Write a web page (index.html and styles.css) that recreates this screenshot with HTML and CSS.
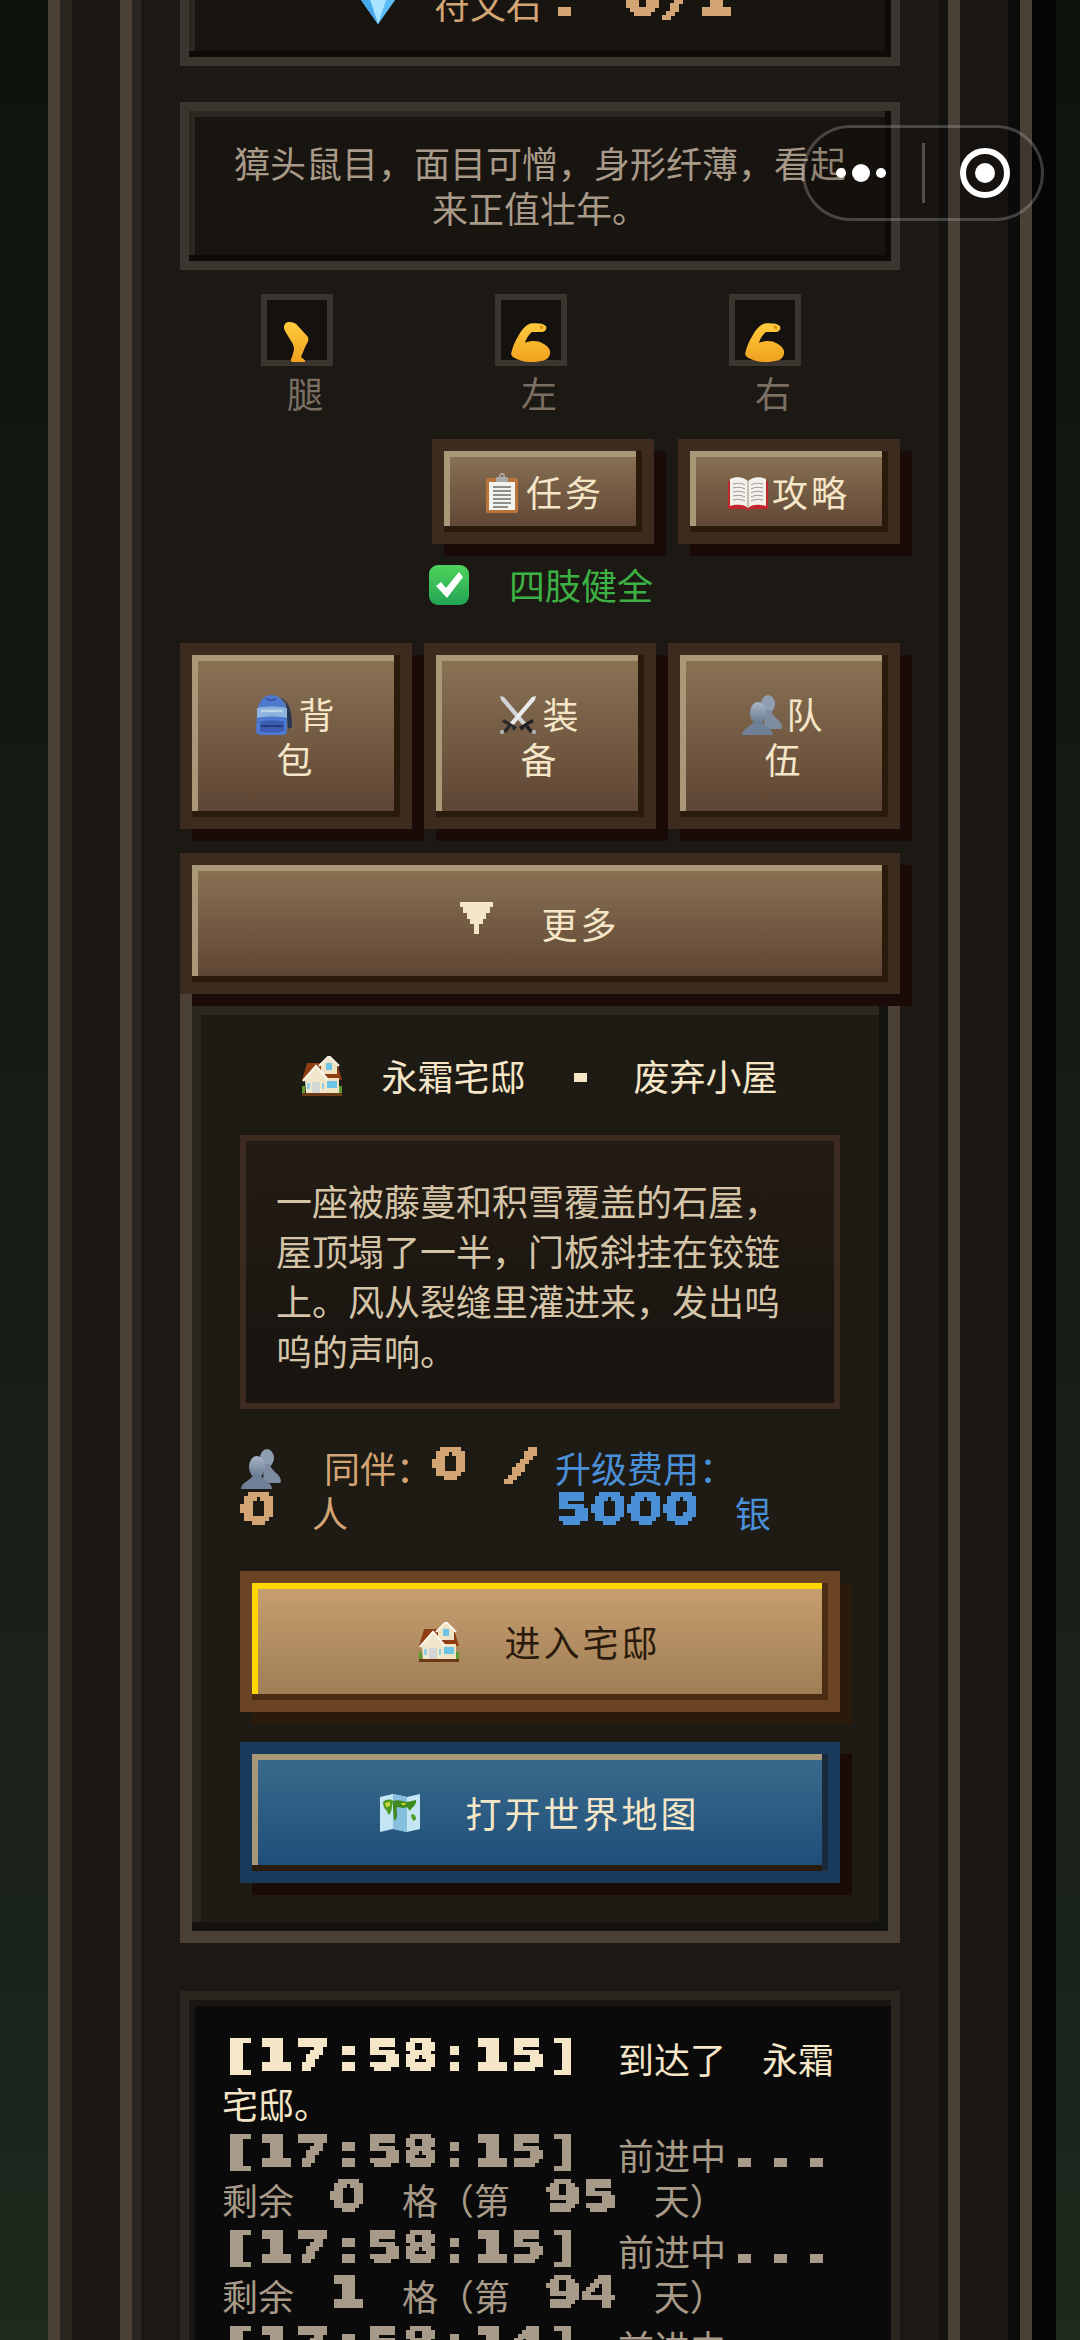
FILE: index.html
```html
<!DOCTYPE html>
<html lang="zh">
<head>
<meta charset="utf-8">
<title>永霜宅邸</title>
<link rel="stylesheet" href="styles.css">
</head>
<body>
<svg class="defs" aria-hidden="true">
  <defs>
    <filter id="pixelate" x="-10%" y="-100%" width="120%" height="300%" color-interpolation-filters="sRGB" primitiveUnits="userSpaceOnUse">
      <feFlood x="2" y="2" width="1" height="1"/>
      <feComposite width="4" height="4"/>
      <feTile result="grid"/>
      <feComposite in="SourceGraphic" in2="grid" operator="in"/>
      <feComponentTransfer><feFuncA type="discrete" tableValues="0 1 1 1"/></feComponentTransfer>
      <feMorphology operator="dilate" radius="2"/>
    </filter>
    <linearGradient id="yel" x1="0" y1="0" x2="0" y2="1"><stop offset="0" stop-color="#ffcb3e"/><stop offset="1" stop-color="#f0a11e"/></linearGradient>
    <linearGradient id="sil" x1="0" y1="0" x2="0" y2="1"><stop offset="0" stop-color="#a9b7c8"/><stop offset="1" stop-color="#66768c"/></linearGradient>
    <linearGradient id="chk" x1="0" y1="0" x2="0" y2="1"><stop offset="0" stop-color="#4fd35a"/><stop offset="1" stop-color="#23a457"/></linearGradient>
    <symbol id="i-gem" viewBox="0 0 42 42">
      <path d="M2 14 L10 2 H32 L40 14 L21 41Z" fill="#7fd0fa"/>
      <path d="M2 14 H40 L21 41Z" fill="#5cbcf4"/>
      <path d="M12 14 H30 L21 41Z" fill="#a8e4ff"/>
      <path d="M2 14 L12 14 L21 41Z" fill="#46a8ea"/>
    </symbol>
    <symbol id="i-leg" viewBox="0 0 40 40">
      <path d="M11 0 C16 0 19 1 21 4 L31 15 C32 18 31 20 29 23 L24 35 C26 37 29 38 28 40 L15 40 C13 38 14 37 15 35 L17 28 C17 24 16 22 14 19 L8 9 C6 5 7 1 11 0Z" fill="url(#yel)"/>
    </symbol>
    <symbol id="i-flex" viewBox="0 0 100 100">
      <path d="M49 4 C60 2 80 2 87 10 C92 18 84 26 76 25 L52 25 C44 32 38 42 35 52 C50 46 68 46 80 54 C100 64 104 82 88 94 C70 102 40 102 24 96 C8 90 -2 86 1 76 C5 60 12 44 20 32 C27 20 36 8 49 4Z" fill="url(#yel)"/>
      <path d="M72 9 C77 8 82 11 80 16 C78 19 73 18 72 14Z" fill="#e08e14"/>
    </symbol>
    <symbol id="i-clip" viewBox="0 0 40 40">
      <rect x="4" y="5" width="32" height="35" rx="2" fill="#b8763c"/>
      <rect x="7" y="9" width="26" height="28" fill="#f2f2ee"/>
      <path d="M11 14H29M11 18H29M11 22H29M11 26H29M11 30H29M11 34H26" stroke="#6d6d6d" stroke-width="1.7"/>
      <rect x="14" y="4" width="12" height="5" rx="1" fill="#a9a9a9"/>
      <circle cx="20" cy="3" r="2.2" fill="none" stroke="#b5b5b5" stroke-width="1.4"/>
    </symbol>
    <symbol id="i-book" viewBox="0 0 40 40">
      <path d="M0 8 V36 H18 L20 38 L22 36 H40 V8Z" fill="#c0262a"/>
      <path d="M2 6 C8 3 16 4 20 8 C24 4 32 3 38 6 V33 C32 31 24 31 20 35 C16 31 8 31 2 33Z" fill="#f4f1ea"/>
      <path d="M20 8 V35" stroke="#b5b0a6" stroke-width="1.5"/>
      <path d="M5 11 C9 10 14 10 17 12M5 15 C9 14 14 14 17 16M5 19 C9 18 14 18 17 20M5 23 C9 22 14 22 17 24M5 27 C9 26 14 26 17 28M23 12 C26 10 31 10 35 11M23 16 C26 14 31 14 35 15M23 20 C26 18 31 18 35 19M23 24 C26 22 31 22 35 23M23 28 C26 26 31 26 35 27" stroke="#9a9a98" stroke-width="1" fill="none"/>
    </symbol>
    <symbol id="i-pack" viewBox="0 0 40 40">
      <path d="M26 3 C34 5 38 14 38 32 L34 34 L32 8Z" fill="#2a3552"/>
      <path d="M17 0 C9 0 4 8 3 18 L2 35 C2 38 4 40 7 40 H28 C31 40 33 38 33 35 V18 C33 8 26 0 17 0Z" fill="#4f78cf"/>
      <path d="M3 13 C11 11 25 11 33 13 V23 C25 21 11 21 3 23Z" fill="#8db4dc"/>
      <path d="M7 16 H29" stroke="#bcd4e8" stroke-width="2.4"/>
      <path d="M6 27 C13 25 23 25 30 27 V36 C23 38 13 38 6 36Z" fill="#3a5cb2"/>
      <path d="M7 31 H29" stroke="#1f3470" stroke-width="1.6"/>
      <path d="M12 3 C14 6 20 6 22 3" stroke="#3a5aa6" stroke-width="2" fill="none"/>
    </symbol>
    <symbol id="i-swords" viewBox="0 0 40 40">
      <path d="M2 1 L6 2 L30 30 L27 33 L3 5Z" fill="#cfd3d6"/>
      <path d="M38 1 L34 2 L10 30 L13 33 L37 5Z" fill="#e8eaec"/>
      <path d="M21 32 L34 24 L36 27 L30 30 L35 36 L32 38 L27 32 L24 36Z" fill="#202022"/>
      <path d="M19 32 L6 24 L4 27 L10 30 L5 36 L8 38 L13 32 L16 36Z" fill="#2a2a2c"/>
      <circle cx="4" cy="37" r="2.2" fill="#a9adb0"/><circle cx="36" cy="37" r="2.2" fill="#a9adb0"/>
    </symbol>
    <symbol id="i-people" viewBox="0 0 40 40">
      <ellipse cx="26" cy="9" rx="7" ry="9" fill="#8f9db0"/>
      <path d="M23 15 H29 C30 23 40 24 40 33 C40 34 38 34 34 34 H22Z" fill="#7d8ca0"/>
      <ellipse cx="16" cy="18" rx="8" ry="11" fill="url(#sil)"/>
      <path d="M12 26 H20 C21 31 31 33 31 40 H0 C0 33 11 31 12 26Z" fill="#6f7f95"/>
    </symbol>
    <symbol id="i-house" viewBox="0 0 40 40">
      <path d="M5 7 H35 L40 24 H0Z" fill="#8f3d12"/>
      <path d="M19 9 L27 1 L35 9 V18 H19Z" fill="#efe3c4"/>
      <path d="M17 10 L27 0 L37 10" stroke="#fbf7ec" stroke-width="2" fill="none"/>
      <rect x="24" y="7" width="6" height="7" fill="#6cc4e8"/>
      <rect x="22" y="22" width="15" height="15" fill="#efe3c4"/>
      <rect x="25" y="25" width="10" height="7" fill="#6cc4e8"/>
      <path d="M3 24 L14 11 L25 24 V37 H4Z" fill="#f0e6cb"/>
      <path d="M1 25 L14 10 L26 24" stroke="#fbf7ec" stroke-width="2.4" fill="none"/>
      <rect x="10" y="26" width="8" height="11" fill="#d3d6d4"/>
      <rect x="5" y="27" width="3" height="6" fill="#8fd0e8"/><rect x="20" y="27" width="2" height="6" fill="#8fd0e8"/>
      <path d="M0 30 H3 V37 H0Z M37 30 H40 V37 H37Z" fill="#5f9a30"/>
      <rect x="0" y="37" width="40" height="3" fill="#6b3a14"/>
    </symbol>
    <symbol id="i-map" viewBox="0 0 40 40">
      <path d="M0 4 L13 1 L27 4 L40 1 V36 L27 39 L13 36 L0 39Z" fill="#c4e6f4"/>
      <path d="M13 1 L27 4 V39 L13 36Z" fill="#86bfdd"/>
      <path d="M3 9 C6 6 12 6 13 8 L12 14 C11 22 8 24 7 18 C5 16 3 14 3 9Z" fill="#4f9a24"/>
      <path d="M13 8 C18 6 24 9 27 9 L36 7 C37 12 32 14 30 18 L27 14 C23 16 20 14 17 14 C16 20 19 22 15 28 C13 26 14 20 13 16Z" fill="#3f8a20"/>
      <path d="M31 22 C33 20 36 22 36 26 C34 29 32 28 31 22Z" fill="#4f9a24"/>
      <path d="M5 10 L10 9 L10 13 L6 14Z M21 10 L26 10 L25 12 L22 12Z" fill="#c8d83a"/>
    </symbol>
    <symbol id="i-check" viewBox="0 0 40 40">
      <rect width="40" height="40" rx="9" fill="url(#chk)"/>
      <path d="M7 21 L12 17 L17 23 L30 7 L34 12 L18 33Z" fill="#fff"/>
    </symbol>
    <symbol id="i-down" viewBox="0 0 33 32">
      <path d="M0 0H33V5H30V11H26V17H23V22H19V32H14V22H10V17H7V11H3V5H0Z" fill="#f5e6c8"/>
    </symbol>
  </defs>
</svg>

<div class="screen">
  <main class="outer">
    <div class="inner">
      <section class="panel rune">
        <svg class="ico"><use href="#i-gem"/></svg> 符文石<span class="px n1"><b><i>:</i></b></span> <span class="px n3"><b>0<i class="sl">/</i>1</b></span>
      </section>

      <section class="panel bio">獐头鼠目，面目可憎，身形纤薄，看起来正值壮年。</section>

      <section class="limbs">
        <div class="limb"><div class="slot"><svg class="limb-ico"><use href="#i-leg"/></svg></div><span class="limb-name">腿</span></div>
        <div class="limb"><div class="slot"><svg class="limb-ico"><use href="#i-flex"/></svg></div><span class="limb-name">左</span></div>
        <div class="limb"><div class="slot"><svg class="limb-ico"><use href="#i-flex"/></svg></div><span class="limb-name">右</span></div>
      </section>

      <nav class="tools">
        <button class="btn tool"><svg class="ico gap"><use href="#i-clip"/></svg>任务</button>
        <button class="btn tool"><svg class="ico gap"><use href="#i-book"/></svg>攻略</button>
      </nav>

      <div class="status"><svg class="ico"><use href="#i-check"/></svg><span>四肢健全</span></div>

      <nav class="grid3">
        <button class="btn square"><svg class="ico gap"><use href="#i-pack"/></svg>背<br>包</button>
        <button class="btn square"><svg class="ico gap"><use href="#i-swords"/></svg>装<br>备</button>
        <button class="btn square"><svg class="ico gap"><use href="#i-people"/></svg>队<br>伍</button>
      </nav>

      <button class="btn wide more"><svg class="down"><use href="#i-down"/></svg><span>更多</span></button>

      <section class="home">
        <h2 class="home-title"><svg class="ico"><use href="#i-house"/></svg><span>永霜宅邸</span><span class="px n1 dot"><b><i>·</i></b></span><span>废弃小屋</span></h2>
        <p class="home-desc">一座被藤蔓和积雪覆盖的石屋，屋顶塌了一半，门板斜挂在铰链上。风从裂缝里灌进来，发出呜呜的声响。</p>
        <div class="stats">
          <div class="stat-left"><svg class="ico people"><use href="#i-people"/></svg> 同伴：<span class="px n1"><b>0</b></span> <span class="px n1"><b><i class="sl">/</i></b></span><br><span class="px n1"><b>0</b></span> 人</div>
          <div class="stat-right">升级费用：<br><span class="px n4"><b>5000</b></span> 银</div>
        </div>
        <button class="btn wide gold"><svg class="ico"><use href="#i-house"/></svg><span>进入宅邸</span></button>
        <button class="btn wide blue"><svg class="ico"><use href="#i-map"/></svg><span>打开世界地图</span></button>
      </section>

      <section class="log">
        <p class="entry latest"><span class="px n10"><b><i>[</i>17<i>:</i>58<i>:</i>15<i>]</i></b></span> 到达了 永霜宅邸。</p>
        <p class="entry"><span class="px n10"><b><i>[</i>17<i>:</i>58<i>:</i>15<i>]</i></b></span> 前进中<span class="px n3"><b><i>.</i><i>.</i><i>.</i></b></span> 剩余 <span class="px n1"><b>0</b></span> 格（第 <span class="px n2"><b>95</b></span> 天）</p>
        <p class="entry"><span class="px n10"><b><i>[</i>17<i>:</i>58<i>:</i>15<i>]</i></b></span> 前进中<span class="px n3"><b><i>.</i><i>.</i><i>.</i></b></span> 剩余 <span class="px n1"><b>1</b></span> 格（第 <span class="px n2"><b>94</b></span> 天）</p>
        <p class="entry"><span class="px n10"><b><i>[</i>17<i>:</i>58<i>:</i>14<i>]</i></b></span> 前进中<span class="px n3"><b><i>.</i><i>.</i><i>.</i></b></span> 剩余 <span class="px n1"><b>2</b></span> 格（第 <span class="px n2"><b>93</b></span> 天）</p>
      </section>
    </div>
  </main>

  <div class="capsule">
    <div class="dots"><i></i><i class="big"></i><i></i></div>
    <div class="sep"></div>
    <div class="target"><i></i></div>
  </div>
</div>
</body>
</html>
```

FILE: styles.css
```css
* { box-sizing: border-box; }
html, body { margin: 0; padding: 0; }
body { background: #0e130e; }
.defs { position: absolute; width: 0; height: 0; }

.screen {
  position: relative;
  width: 1080px;
  height: 2340px;
  overflow: hidden;
  padding-left: 48px;
  background: linear-gradient(180deg, #0e130e 0%, #141a14 40%, #1b241b 85%, #1e2a1e 100%);
  font-family: "Noto Sans CJK SC", "Noto Sans", sans-serif;
  font-size: 36px;
  line-height: 45px;
  word-spacing: 27.9px;
  color: #f5e6c8;
}

.outer {
  width: 984px;
  min-height: 2340px;
  padding: 0 60px;
  background: #1a1612;
  border-left: 12px solid #4a4036;
  border-right: 12px solid #4a4036;
  box-shadow: 24px 0 0 #050505, inset 12px 0 0 #2a2620, inset -12px 0 0 #0e0c0a;
}
.inner {
  width: 840px;
  min-height: 2400px;
  margin-top: -57px;
  padding: 0 48px;
  background: #1c1814;
  border-left: 12px solid #4a4036;
  border-right: 12px solid #4a4036;
  box-shadow: inset 9px 0 0 #2a2620, inset -9px 0 0 #141210;
}

/* pixel numerals */
.px {
  display: inline-block;
  height: 30px;
  line-height: 30px;
  vertical-align: 5px;
  word-spacing: 0;
  white-space: nowrap;
  filter: url(#pixelate);
}
.px b {
  display: inline-block;
  font-family: "DejaVu Sans", sans-serif;
  font-size: 41px;
  font-weight: 700;
  letter-spacing: 0;
  transform: scaleX(1.26);
  transform-origin: 0 50%;
}
.px i {
  display: inline-block;
  width: 28.5px;
  font-style: normal;
  text-align: center;
}
.px .sl { font-weight: 400; transform: scaleX(1.9); }
.dot { vertical-align: 11px; }
.n1 { width: 36px; }
.n2 { width: 72px; }
.n3 { width: 108px; }
.n4 { width: 144px; }
.n10 { width: 360px; }

.ico { width: 40px; height: 40px; vertical-align: -6px; }
.gap { margin-right: 4px; }

/* sunken panels */
.panel {
  padding: 29px 36px 31px;
  border: 9px solid #3a352e;
  background: #181410;
  text-align: center;
  box-shadow: inset -6px -6px 0 #0e0a08, inset 6px 6px 0 #2a2620;
}
.rune { color: #d4a574; }
.bio { margin-top: 36px; color: #a89a88; }

/* limbs */
.limbs { display: flex; margin: 24px 0 2px 8px; }
.limb { width: 234px; display: flex; flex-direction: column; align-items: center; }
.slot {
  position: relative;
  width: 72px;
  height: 72px;
  margin-right: 16px;
  border: 6px solid #3a352e;
  background: #14110e;
}
.limb-ico { position: absolute; left: 10px; bottom: -2px; width: 40px; height: 40px; }
.limb-name { margin-top: 4px; color: #7a6f62; }

/* bevelled buttons */
.btn {
  display: block;
  border: 12px solid #3d2b1f;
  padding: 0;
  font: inherit;
  word-spacing: inherit;
  color: #f5e6c8;
  letter-spacing: 3px;
  background: linear-gradient(180deg, #8b7355 0%, #5c4433 100%);
  box-shadow: 12px 12px 0 #1a0a08, inset -6px -6px 0 #2a1a0c, inset 6px 6px 0 #a89878;
}
.tools { display: flex; justify-content: flex-end; gap: 24px; margin-top: 24px; }
.tool { width: 222px; padding: 18px 0; white-space: nowrap; }

.status {
  display: flex;
  justify-content: center;
  align-items: center;
  gap: 40px;
  margin-top: 18px;
  padding-left: 2px;
  color: #3cb043;
}

.grid3 { display: flex; gap: 12px; margin-top: 36px; }
.square { width: 232px; padding: 36px 0; }

.wide {
  display: flex;
  justify-content: center;
  align-items: center;
  width: 100%;
  padding: 36px 0;
}
.more { position: relative; z-index: 1; margin-top: 24px; gap: 48px; }
.down { width: 33px; height: 32px; margin-top: -12px; }

/* residence */
.home {
  padding: 47px 48px 48px;
  border: 12px solid #4a4036;
  background: #1e1a14;
  box-shadow: inset -9px -9px 0 #14120e, inset 9px 9px 0 #2a2620;
}
.home-title {
  display: flex;
  justify-content: center;
  align-items: center;
  margin: 0;
  font: inherit;
  word-spacing: 0;
}
.home-title > :nth-child(1) { margin-right: 39px; }
.home-title > :nth-child(3) { margin: 0 36px; }
.home-desc {
  margin: 37px 0 0;
  padding: 34px 30px 28px;
  border: 6px solid #3d2b1f;
  background: linear-gradient(180deg, #241c14 0%, #17130f 100%);
  color: #d4c4a8;
  line-height: 50px;
}
.stats { display: flex; margin-top: 36px; }
.stat-left { width: 315px; color: #d4a574; }
.stat-right { color: #4a90d9; }
.people { width: 42px; margin-right: 6px; }

.gold {
  margin-top: 36px;
  gap: 45px;
  border-color: #6b4423;
  color: #2a1a0c;
  background: linear-gradient(180deg, #c9a070 0%, #9c7c54 100%);
  box-shadow: 12px 12px 0 #2a1a0c, inset -6px -6px 0 #4a2c10, inset 6px 6px 0 #ffd700;
}
.blue {
  margin-top: 30px;
  gap: 45px;
  border-color: #1a3a5c;
  background: linear-gradient(180deg, #3a6b8c 0%, #1e4d78 100%);
  box-shadow: 12px 12px 0 #1a0a08, inset -6px 0 0 #1a2a3a, inset 0 -6px 0 #2a1a0c, inset 6px 6px 0 #a89878;
}

/* log */
.log {
  margin-top: 48px;
  padding: 36px 33px;
  border: 9px solid #2a2620;
  background: #0a0a0a;
  box-shadow: inset 6px 6px 0 #1a1612;
  color: #a89a88;
}
.entry { margin: 0 0 6px; }
.latest { color: #f5e6c8; }

/* mini-program capsule */
.capsule {
  position: absolute;
  left: 802px;
  top: 125px;
  width: 242px;
  height: 96px;
  display: flex;
  align-items: center;
  border: 3px solid rgba(255,255,255,.22);
  border-radius: 48px;
  background: rgba(0,0,0,.15);
}
.dots { display: flex; align-items: center; gap: 6px; margin-left: 31px; }
.dots i { width: 10px; height: 10px; border-radius: 50%; background: #fff; }
.dots .big { width: 18px; height: 18px; }
.sep { width: 3px; height: 60px; margin-left: 36px; background: rgba(255,255,255,.25); }
.target {
  display: flex;
  justify-content: center;
  align-items: center;
  width: 50px;
  height: 50px;
  margin-left: 35px;
  border: 6px solid #fff;
  border-radius: 50%;
}
.target i { width: 20px; height: 20px; border-radius: 50%; background: #fff; }
```
